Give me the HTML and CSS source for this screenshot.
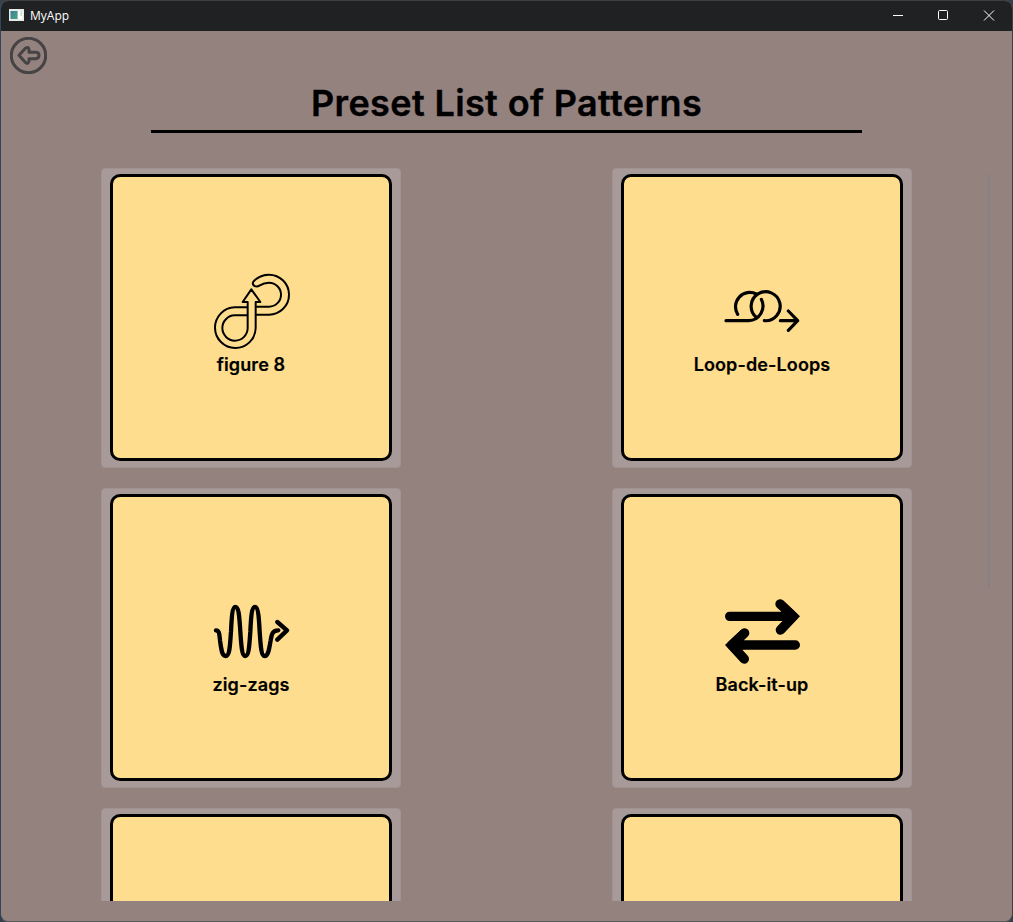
FILE: index.html
```html
<!DOCTYPE html>
<html lang="en">
<head>
<meta charset="utf-8">
<title>MyApp</title>
<link rel="stylesheet" href="styles.css">
</head>
<body>
<div class="window">
  <header class="titlebar">
    <svg class="app-icon" viewBox="0 0 15 12"><defs><linearGradient id="g" x1="0" y1="0" x2="1" y2="1"><stop offset="0" stop-color="#3d7fa0"/><stop offset="1" stop-color="#48a878"/></linearGradient></defs><path fill="#e8eaea" d="M0 0h15v12H0z"/><path fill="url(#g)" d="M1.500 2h7v8h-7z"/><path fill="#fff" d="M9 2h4.500v8H9z"/><path fill="#c4dcd8" d="M11.500 2h1.500v5h-1.500z"/></svg>
    <span class="app-name">MyApp</span>
    <div class="controls">
      <svg viewBox="0 0 46 30"><path d="M17 15.500h10"/></svg>
      <svg viewBox="0 0 46 30"><rect x="16.500" y="10.500" width="9" height="9" rx="1"/></svg>
      <svg viewBox="0 0 46 30"><path d="M16 10.500l10 10M26 10.500l-10 10"/></svg>
    </div>
  </header>
  <main class="content">
    <button class="back" aria-label="Back"><svg viewBox="0 0 111 111"><circle cx="55.500" cy="55.500" r="51.500"/><path d="M27 55 47 33Q56 28 57 38V46H78Q87 47 87 55Q87 64 78 65H57V72Q55 83 47 77Z"/></svg></button>
    <h1 class="title">Preset List of Patterns</h1>
    <div class="list">
      <div class="tile"><div class="card">
        <svg class="thin" viewBox="0 0 225 225"><path d="M126 98H165A36 36 0 0 0 165 26Q150 26 136 35C126 42 112 33 118 23Q137 2 165 2A60 60 0 0 1 165 122H126M101 100H62A61 61 0 1 0 125 163V84H139L112 46 86 84H101V163A38 38 0 1 1 62 124H101"/></svg>
        <span>figure 8</span></div></div>
      <div class="tile"><div class="card">
        <svg class="loops" viewBox="134 13 225 225"><path d="M137 153H205A44 44 0 0 0 243 89M172 134A43 43 0 0 1 228 73M252 153A43.500 43.500 0 1 0 228 143M300 153H352M324 124 352 153 324 182"/></svg>
        <span>Loop-de-Loops</span></div></div>
      <div class="tile"><div class="card">
        <svg class="waves" viewBox="42 11 225 225"><path d="M48 120C58 121 58 130 60 150C64 180 66 197 77 197C90 197 90 160 93 124C95 80 97 50 106 50C117 50 118 80 121 124C124 170 126 197 136 197C147 197 148 165 151 124C153 80 155 50 165 50C175 50 177 85 179 124C182 170 184 197 194 197C206 197 208 170 212 150C215 130 218 120 235 120M232 95 261 120 232 148"/></svg>
        <span>zig-zags</span></div></div>
      <div class="tile"><div class="card">
        <svg class="swap" viewBox="75 27 225 225"><path d="M89 94H276M240 57 280 94 241 135M286 180H99M134 144 95 180 133 222"/><path class="tip" d="M249 46 300 94 250 146ZM125 133 75 180 124 232Z"/></svg>
        <span>Back-it-up</span></div></div>
      <div class="tile"><div class="card"></div></div>
      <div class="tile"><div class="card"></div></div>
    </div>
    <div class="scrollbar"></div>
  </main>
</div>
</body>
</html>
```
FILE: styles.css
```css
* { box-sizing: border-box; }
body { margin: 0; background: #34414a; }
.window {
  width: 1013px; height: 922px; overflow: hidden;
  display: flex; flex-direction: column;
  border: 1px solid #3c4043; border-left-color: #30475a; border-bottom-color: #5d5a5a;
  border-radius: 8px; background: #94827f;
}
.titlebar {
  height: 30px; flex: none; display: flex; align-items: center;
  background: #1f2122; color: #fff; font: 12px "Open Sans", sans-serif;
}
.app-icon { width: 15px; height: 12px; margin: 0 6px 2px 8px; }
.app-name { margin-bottom: 1px; }
.controls { display: flex; margin: -1px -2px 0 auto; }
.controls svg { width: 46px; height: 30px; margin-top: -1px; fill: none; stroke: #fff; stroke-width: 1; }
.content {
  position: relative; flex: 1; min-height: 0;
  display: flex; flex-direction: column; align-items: center;
  font-family: Inter, sans-serif; color: #000; padding-bottom: 20px;
}
.back { position: absolute; left: 9px; top: 6px; width: 37px; height: 37px; padding: 0; border: 0; background: none; }
.back svg { display: block; fill: none; stroke: #454343; stroke-width: 9; stroke-linejoin: round; }
.title {
  width: 711px; height: 59px; margin: 43px 0 0; padding-top: 6px;
  border-bottom: 3px solid #000; text-align: center;
  font-size: 36px; line-height: 46px; font-weight: 600; letter-spacing: 0.38px;
  -webkit-text-stroke: 0.4px #000;
}
.list {
  width: 811px; flex: 1; min-height: 0; margin-top: 35px; overflow: hidden;
  display: grid; grid-template-columns: 300px 300px; grid-auto-rows: 300px;
  justify-content: space-between; align-content: start; row-gap: 20px;
}
.tile { padding: 5px 8px 6px; border: 1px solid #a09391; border-radius: 4px; background: #a79a98; }
.card {
  height: 287px; display: flex; flex-direction: column; align-items: center; justify-content: center;
  border: 3px solid #000; border-radius: 10px; background: #ffdd8e;
  font-size: 18px; line-height: 22px; font-weight: 600; letter-spacing: 0.12px;
}
.card svg { width: 75px; height: 75px; margin-top: 14px; overflow: visible; fill: none; stroke: #000; stroke-linecap: round; stroke-linejoin: round; }
.card span { margin-top: 5px; -webkit-text-stroke: 0.2px #000; }
.card .thin { stroke-width: 6; stroke-linecap: butt; }
.card .loops { stroke-width: 9.5; }
.card .waves { stroke-width: 13; }
.card .swap { stroke-width: 28; }
.card .tip { fill: #000; stroke: none; }
.scrollbar { position: absolute; left: 987px; top: 143px; width: 2px; height: 414px; background: #888181; }
```
